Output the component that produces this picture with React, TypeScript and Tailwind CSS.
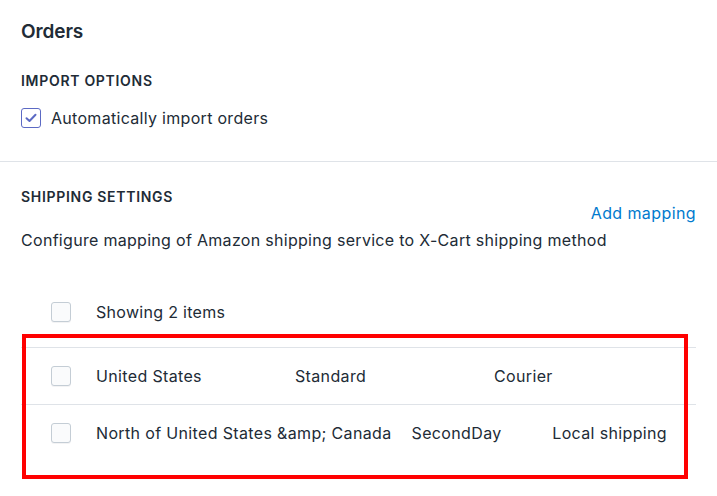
import React from "react";

function Box({ checked = false }: { checked?: boolean }) {
  if (checked) {
    return (
      <div className="w-[20px] h-[20px] shrink-0 rounded-[3px] border-[1.5px] border-[#5c6ac4] bg-white flex items-center justify-center">
        <svg width="12" height="10" viewBox="0 0 12 10" fill="none">
          <path d="M1.5 5.2 L4.5 8 L10.5 1.8" stroke="#5c6ac4" strokeWidth="2" strokeLinecap="round" strokeLinejoin="round" />
        </svg>
      </div>
    );
  }
  return (
    <div className="w-[20px] h-[20px] shrink-0 rounded-[3px] border border-[#c4cdd5] bg-[#fafbfc] shadow-[0_1px_0_rgba(22,29,37,0.05)]" />
  );
}

function Row({ cells }: { cells: string[] }) {
  return (
    <div className="flex items-center h-[57px] border-t border-[#dfe3e8] pr-[13px]">
      <div className="w-[65px] shrink-0 pl-[30px]">
        <Box />
      </div>
      {cells.map((c) => (
        <div key={c} className="flex-1 px-[10px] whitespace-nowrap text-[16px] leading-[20px] tracking-[0.35px]">
          {c}
        </div>
      ))}
    </div>
  );
}

export default function App() {
  return (
    <div className="w-[717px] h-[496px] bg-white overflow-hidden text-[#212b36] font-['Inter','Liberation_Sans',sans-serif]">
      <div className="px-[21px] pt-[20px] pb-[33px]">
        <h2 className="text-[19px] leading-[24px] font-semibold tracking-[-0.1px]">Orders</h2>
        <div className="mt-[27px] text-[14px] leading-[20px] font-semibold tracking-[0.7px]">IMPORT OPTIONS</div>
        <div className="mt-[17px] flex items-center gap-[10px] h-[20px]">
          <Box checked />
          <span className="text-[16px] leading-[20px] tracking-[0.3px]">Automatically import orders</span>
        </div>
      </div>
      <div className="h-px bg-[#dfe3e8]" />
      <div className="px-[21px] pt-[25px]">
        <div className="flex justify-between items-start">
          <div className="text-[14px] leading-[20px] font-semibold tracking-[0.7px]">SHIPPING SETTINGS</div>
          <div className="mt-[16px] text-[16px] leading-[20px] tracking-[0.4px] text-[#007ace]">Add mapping</div>
        </div>
        <p className="mt-[7px] text-[16px] leading-[20px] tracking-[0.3px]">
          Configure mapping of Amazon shipping service to X-Cart shipping method
        </p>
        <div className="mt-[52px] flex items-center h-[20px]">
          <div className="ml-[30px]">
            <Box />
          </div>
          <span className="ml-[25px] text-[16px] leading-[20px] tracking-[0.3px]">Showing 2 items</span>
        </div>
        <div className="relative mt-[25px]">
          <Row cells={["United States", "Standard", "Courier"]} />
          <Row cells={["North of United States &amp; Canada", "SecondDay", "Local shipping"]} />
          <div className="absolute left-[1px] top-[-13px] w-[666px] h-[145px] border-[4px] border-[#ff0000] pointer-events-none" />
        </div>
      </div>
    </div>
  );
}
